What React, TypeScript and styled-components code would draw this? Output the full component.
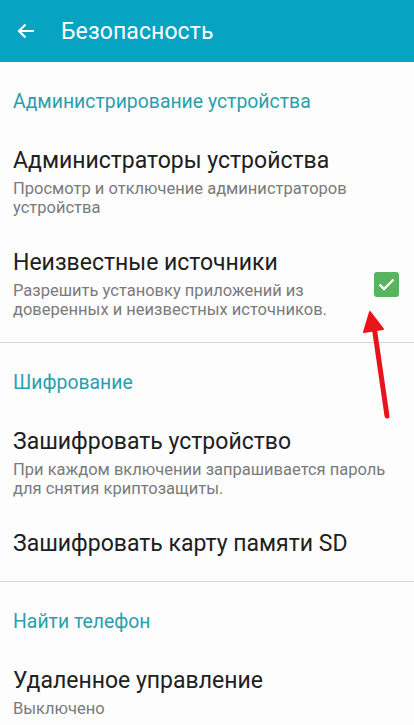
import React from "react";
import styled, { createGlobalStyle } from "styled-components";

const Global = createGlobalStyle`
  html, body { margin: 0; padding: 0; background: #fff; }
  body { font-family: Roboto, "Noto Sans", sans-serif; overflow: hidden; }
  * { box-sizing: border-box; }
`;

const Screen = styled.div`
  position: relative;
  width: 414px;
  height: 725px;
  overflow: hidden;
  background: #fdfdfd;
`;

const AppBar = styled.header`
  height: 62px;
  background: #07a3c3;
  display: flex;
  align-items: center;
  padding-left: 14px;
  gap: 23px;
`;

const BarTitle = styled.h1`
  margin: 0;
  font-size: 23px;
  font-weight: 400;
  color: #ffffff;
  letter-spacing: 0.1px;
`;

const Section = styled.section<{ $divider?: boolean }>`
  padding-bottom: ${(p) => (p.$divider ? "7px" : "0")};
  border-bottom: ${(p) => (p.$divider ? "1px solid #d6d6d6" : "none")};
`;

const SectionTitle = styled.div`
  padding: 29px 13px 18px;
  font-size: 19.4px;
  line-height: 22px;
  color: #2b9fad;
`;

const Item = styled.div`
  display: flex;
  align-items: center;
  padding: 16px 13px;
`;

const ItemText = styled.div`
  flex: 1;
  min-width: 0;
`;

const ItemTitle = styled.div`
  font-size: 23px;
  line-height: 28px;
  color: #202020;
`;

const ItemSub = styled.div`
  margin-top: 4px;
  font-size: 16.5px;
  line-height: 19px;
  color: #7a7a7a;
`;

const Check = styled.div`
  width: 25px;
  height: 25px;
  border-radius: 3px;
  background: #58b45e;
  display: flex;
  align-items: center;
  justify-content: center;
  margin-right: 2px;
  margin-left: 10px;
  flex: none;
`;

const Overlay = styled.svg`
  position: absolute;
  left: 0;
  top: 0;
  pointer-events: none;
`;

export default function App() {
  return (
    <Screen>
      <Global />
      <AppBar>
        <svg width="24" height="24" viewBox="0 0 24 24">
          <path d="M20 12H5M11.5 5.5L5 12l6.5 6.5" stroke="#fff" strokeWidth="2.2" fill="none" strokeLinecap="butt" />
        </svg>
        <BarTitle>Безопасность</BarTitle>
      </AppBar>

      <Section $divider>
        <SectionTitle>Администрирование устройства</SectionTitle>
        <Item>
          <ItemText>
            <ItemTitle>Администраторы устройства</ItemTitle>
            <ItemSub>Просмотр и отключение администраторов<br />устройства</ItemSub>
          </ItemText>
        </Item>
        <Item>
          <ItemText>
            <ItemTitle>Неизвестные источники</ItemTitle>
            <ItemSub>Разрешить установку приложений из<br />доверенных и неизвестных источников.</ItemSub>
          </ItemText>
          <Check>
            <svg width="17" height="13" viewBox="0 0 17 13">
              <path d="M1.5 6.5l4.5 4.5L15.5 1.5" stroke="#fff" strokeWidth="2.4" fill="none" />
            </svg>
          </Check>
        </Item>
      </Section>

      <Section $divider>
        <SectionTitle>Шифрование</SectionTitle>
        <Item>
          <ItemText>
            <ItemTitle>Зашифровать устройство</ItemTitle>
            <ItemSub>При каждом включении запрашивается пароль<br />для снятия криптозащиты.</ItemSub>
          </ItemText>
        </Item>
        <Item>
          <ItemText>
            <ItemTitle>Зашифровать карту памяти SD</ItemTitle>
          </ItemText>
        </Item>
      </Section>

      <Section>
        <SectionTitle>Найти телефон</SectionTitle>
        <Item>
          <ItemText>
            <ItemTitle>Удаленное управление</ItemTitle>
            <ItemSub>Выключено</ItemSub>
          </ItemText>
        </Item>
      </Section>

      <Overlay width="414" height="725" viewBox="0 0 414 725">
        <path d="M387 416 L374 326" stroke="#e8141c" strokeWidth="5" strokeLinecap="round" />
        <polygon points="370,312 364,332 383,329" fill="#e8141c" stroke="#e8141c" strokeWidth="2" strokeLinejoin="round" />
      </Overlay>
    </Screen>
  );
}
